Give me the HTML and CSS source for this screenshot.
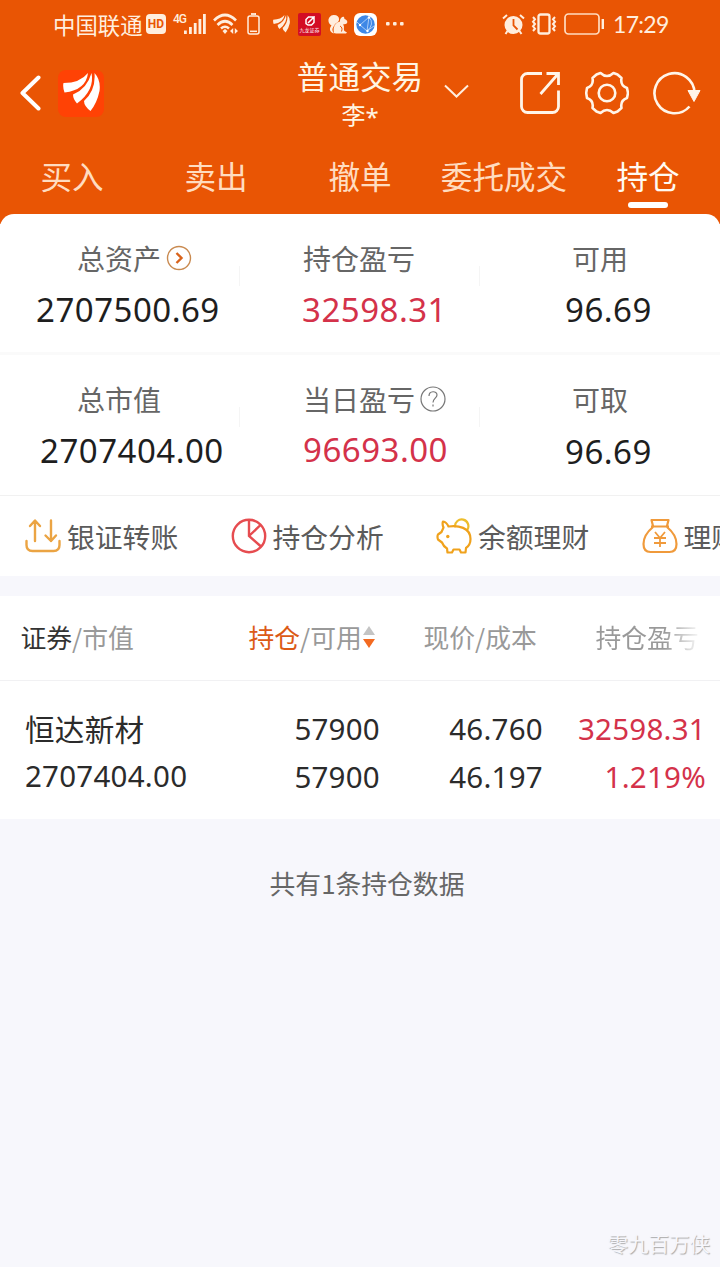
FILE: index.html
```html
<!DOCTYPE html>
<html lang="zh-CN">
<head>
<meta charset="utf-8">
<title>普通交易 - 持仓</title>
<link rel="stylesheet" href="styles.css">
</head>
<body>
<div class="app">
  <header class="header">
    <div class="status">
      <span class="carrier">中国联通</span>
      <span class="hd">HD</span>
      <span class="net">4G</span>
      <svg class="signal" width="23" height="20" viewBox="0 0 23 20"><g fill="#ffeede"><rect x="0" y="16.500" width="2.800" height="3.500"/><rect x="5" y="13" width="2.800" height="7"/><rect x="9.800" y="9" width="2.800" height="11"/><rect x="14.500" y="5" width="2.800" height="15"/><rect x="19" y="0" width="2.800" height="20"/></g></svg>
      <svg class="wifi" width="26" height="22" viewBox="0 0 26 22" fill="none" stroke="#ffeede" stroke-width="2.600"><path d="M1 7.500Q12 -3.500 23 7.500M4.500 12Q12 4.500 19.500 12M8 15.500Q12 12 16 15.500"/><path d="M9.500 18l2.500-2 2.500 2-2.500 3z" fill="#ffeede" stroke="none"/><path d="M20.200 15v6l-3.200-3zM21.800 15v6l3.200-3z" fill="#ffeede" stroke="none"/></svg>
      <svg class="cell" width="13" height="22" viewBox="0 0 13 22" fill="none" stroke="#ffeede"><rect x="1" y="3" width="11" height="18" rx="2" stroke-width="1.500"/><path d="M4 1h5" stroke-width="1.800"/><path d="M3 18.300h7" stroke-width="1.500"/></svg>
      <svg class="mini-logo" width="17" height="20" viewBox="0 0 37 41" fill="#ffeede"><path d="M.5 11Q17 11 25 1Q23 18 1.500 20.500Q-.5 15 .5 11Z"/><path d="M10 22.500Q24 17 28.500 1Q32 18 14 31.500Q10 27 10 22.500Z"/><path d="M21 29Q33 18 31.500 1Q38 8 36.500 19Q34 31 27.500 39Q21 34 21 29Z"/></svg>
      <span class="broker"><svg width="12" height="10" viewBox="0 0 12 10" fill="none" stroke="#fff" stroke-width="1.500"><path d="M9.500 1H4.500L2 3.500V7.500L4 9H7.500L10 6.500V1L4 7"/></svg><span>九龙证券</span></span>
      <svg class="squirrel" width="20" height="20" viewBox="0 0 20 20"><path d="M3.500 11.500C-1.500 9 0 1.500 5.500 1c5-.3 7 4 4.500 7-1.500 1.500-3 1-3.500 3.500-3 3-2.500 6 0 8C2 19 .5 15 3.500 11.500Z" fill="#ffeede"/><path d="M6 19C4.500 13 7.500 8.500 12 7.500c-.5-3 2.500-5.500 4-4.500l.5 2c3 1 4 4 1 5l-2.500.5c2 2 0 5 1.500 6.500l2.500 1.500-1 1H8Z" fill="#ffeede"/><path d="M12 12q3 1.500 1.500 5.500" stroke="#e95504" fill="none"/></svg>
      <svg class="globe" width="23" height="23" viewBox="0 0 23 23"><rect width="23" height="23" rx="6" fill="#fff"/><circle cx="11.500" cy="11.500" r="9.200" fill="#3e87e6"/><path d="M15 4 6 12 13 18zM15 4q6 7-2 14M3 9l3 3M13 18l7-5" fill="none" stroke="#d8eaff" stroke-width=".7"/><circle cx="15" cy="4.500" r="1.200" fill="#fff"/><circle cx="6" cy="12" r="1.200" fill="#fff"/><circle cx="13.500" cy="18" r="1.200" fill="#fff"/></svg>
      <svg class="dots" width="18" height="4" viewBox="0 0 18 4" fill="#ffeede"><rect width="3.600" height="3.600" rx="1"/><rect x="7" width="3.600" height="3.600" rx="1"/><rect x="14" width="3.600" height="3.600" rx="1"/></svg>
      <svg class="alarm" width="23" height="21" viewBox="0 0 23 21"><circle cx="11.500" cy="11" r="9" fill="#ffeede"/><path d="M1 4.500 5 1M22 4.500 18 1M5.500 17 3.500 20M17.500 17l2 3" stroke="#ffeede" stroke-width="2"/><path d="M11.500 5v6.500l4 4" fill="none" stroke="#e95504" stroke-width="1.800"/></svg>
      <svg class="vibrate" width="26" height="22" viewBox="0 0 26 22" fill="none" stroke="#ffeede" stroke-width="2.300"><rect x="7.500" y="1.500" width="11" height="19" rx="2"/><path d="M2 4l2 2.300L2 8.700 4 11l-2 2.300 2 2.400L2 18M24 4l-2 2.300 2 2.400L22 11l2 2.300-2 2.400 2 2.300" stroke-width="2"/></svg>
      <svg class="battery" width="41" height="22" viewBox="0 0 41 22" fill="none" stroke="#ffdcc0"><rect x="1" y="1" width="34" height="20" rx="3.500" stroke-width="1.700"/><path d="M38.800 6v10" stroke-width="2.400" stroke="#ffeede"/></svg>
      <span class="clock">17:29</span>
    </div>

    <div class="navbar">
      <svg class="back" width="22" height="36" viewBox="0 0 22 36" fill="none" stroke="#fff" stroke-width="4" stroke-linecap="round" stroke-linejoin="round"><path d="M18.500 2.500 2.500 18l16 15.500"/></svg>
      <span class="logo"><svg width="37" height="41" viewBox="0 0 37 41" fill="#fff"><path d="M.5 11Q17 11 25 1Q23 18 1.500 20.500Q-.5 15 .5 11Z"/><path d="M10 22.500Q24 17 28.500 1Q32 18 14 31.500Q10 27 10 22.500Z"/><path d="M21 29Q33 18 31.500 1Q38 8 36.500 19Q34 31 27.500 39Q21 34 21 29Z"/></svg></span>
      <div class="title"><div class="title-main">普通交易</div><div class="title-sub">李<span class="star">*</span></div></div>
      <svg class="caret" width="25" height="14" viewBox="0 0 25 14" fill="none" stroke="#ffeede" stroke-width="2"><path d="M1 1.500 12.500 12.500 24 1.500"/></svg>
      <svg class="share" width="40" height="44" viewBox="0 0 40 44" fill="none" stroke="#fff5e9" stroke-width="2.800"><path d="M22 2.500H7.500a6 6 0 0 0-6 6V35.500a6 6 0 0 0 6 6h25a6 6 0 0 0 6-6V19.500M26.500 2.500H38.500V14M38 3 20.500 23"/></svg>
      <svg class="gear" width="44" height="44" viewBox="0 0 44 44" fill="none" stroke="#fff5e9" stroke-width="2.600" stroke-linejoin="round"><path d="M11.500 3.500 15.500 2Q22 8 28.500 2L32.500 3.500 36.500 7Q35 14.500 42 17L43 22 42 27Q35 29.500 36.500 37L32.500 40.500 28.500 42Q22 36 15.500 42L11.500 40.500 7.500 37Q9 29.500 2 27L1.200 22 2 17Q9 14.500 7.500 7Z"/><circle cx="22" cy="22" r="8.300"/></svg>
      <svg class="refresh" width="48" height="44" viewBox="0 0 48 44" fill="none" stroke="#fff5e9" stroke-width="2.600"><path d="M36.500 35.500A20 20 0 1 1 41.500 22"/><path d="M35 19.500h12l-6 11z" fill="#fff5e9" stroke-width="1"/></svg>
    </div>

    <nav class="tabs"><span>买入</span><span>卖出</span><span>撤单</span><span>委托成交</span><span class="active">持仓</span></nav>
  </header>

  <section class="assets">
    <div class="asset-row">
      <div class="cell-a"><div class="label">总资产<svg class="more" width="26" height="26" viewBox="0 0 26 26" fill="none"><circle cx="13" cy="13" r="11.500" stroke="#c98a50" stroke-width="1.400"/><path d="m10.500 8 5 5-5 5" stroke="#d9631b" stroke-width="2.400"/></svg></div><div class="value">2707500.69</div></div>
      <div class="cell-b"><div class="label">持仓盈亏</div><div class="value up">32598.31</div></div>
      <div class="cell-c"><div class="label">可用</div><div class="value">96.69</div></div>
    </div>
    <div class="asset-row second">
      <div class="cell-a"><div class="label">总市值</div><div class="value">2707404.00</div></div>
      <div class="cell-b"><div class="label">当日盈亏<svg class="help" width="26" height="26" viewBox="0 0 26 26" fill="none" stroke="#777" stroke-width="1.200"><circle cx="13" cy="13" r="12"/><path d="M9 10c0-5.500 8-5.500 8-1 0 3-4 3.500-4 7.500M13 18.500v2"/></svg></div><div class="value up daily">96693.00</div></div>
      <div class="cell-c"><div class="label">可取</div><div class="value cash">96.69</div></div>
    </div>
  </section>

  <section class="tools">
    <div class="tool"><svg width="36" height="36" viewBox="0 0 36 36" fill="none" stroke="#eba443" stroke-width="2.400" stroke-linecap="round" stroke-linejoin="round"><path d="M10 23V3M5 8l5-5.500L15 8M26 2.500V23M20.500 17.500l5.500 5.500 5-5.500M1.500 23v4q0 6 6 6h21q6 0 6-6v-4"/></svg><span>银证转账</span></div>
    <div class="tool"><svg width="36" height="36" viewBox="0 0 36 36" fill="none" stroke="#e64c50" stroke-width="2.400"><circle cx="18" cy="18" r="16.200"/><path d="M18 2v16l12 10.500M18 18 29.500 7"/></svg><span>持仓分析</span></div>
    <div class="tool"><svg width="36" height="36" viewBox="0 0 36 36" fill="none" stroke="#f0a21c" stroke-width="2.200" stroke-linejoin="round" stroke-linecap="round"><path d="M19 8.500A6.700 6.700 0 1 1 31.500 11.500" stroke="#edbd2c"/><path d="M7 3.500Q10.500 4 12.500 8.500C22 7 34.500 9.500 34.500 21q0 6-4.500 9l-.5 4.500h-4.500l-1.500-3h-6l-1.500 3H11.500L11 30.500q-3.500-2-5-6L2 21.500Q1 18.500 2 16.500L5.500 14 7.500 9.500Q6 6 7 3.500z"/><circle cx="11.800" cy="18.500" r="1.700" fill="#f0a21c" stroke="none"/></svg><span>余额理财</span></div>
    <div class="tool"><svg width="36" height="36" viewBox="0 0 36 36" fill="none" stroke="#f09a3b" stroke-width="2.200" stroke-linejoin="round"><path d="M11 8 9.500 2h17L25 8M9 8.500h18M11 9C5 14 1.500 20 1.500 26q0 8 7 8h19q7 0 7-8c0-6-3.500-12-9.500-17"/><path d="m13 14 5 6 5-6M12 20h12M12 25h12M18 20v9" stroke-width="1.800"/></svg><span>理财</span></div>
  </section>

  <section class="table">
    <div class="thead">
      <div><b>证券</b>/市值</div>
      <div><b class="sorted">持仓</b>/可用<svg class="sort" width="12" height="24" viewBox="0 0 12 24"><path d="M0 10 6 1l6 9z" fill="#c4c4c4"/><path d="M0 14h12l-6 9z" fill="#f36a20"/></svg></div>
      <div>现价/成本</div>
      <div class="fade">持仓盈亏</div>
    </div>
    <div class="trow">
      <div><p class="name">恒达新材</p><p>2707404.00</p></div>
      <div><p>57900</p><p>57900</p></div>
      <div><p>46.760</p><p>46.197</p></div>
      <div class="up"><p>32598.31</p><p>1.219%</p></div>
    </div>
  </section>

  <p class="summary">共有1条持仓数据</p>
  <footer class="watermark">零九百万侠</footer>
</div>
</body>
</html>
```
FILE: styles.css
```css
* { box-sizing: border-box; }
body { margin: 0; font-family: "Noto Sans CJK SC", sans-serif; }
p { margin: 0; }
svg { display: block; flex: none; }
.app { width: 720px; height: 1267px; overflow: hidden; background: #f7f7fc; display: flex; flex-direction: column; }

.header { flex: none; height: 224px; background: #e95504; color: #ffeede; }
.status { height: 48px; display: flex; align-items: center; padding-left: 53px; white-space: nowrap; }
.carrier { width: 93px; font-size: 22.4px; line-height: 46px; }
.hd { width: 20px; height: 20px; border-radius: 4px; background: #ffeede; color: #e95504; font: bold 12px/20px Roboto, sans-serif; text-align: center; }
.net { width: 18px; margin-left: 7px; align-self: flex-start; font: 500 12px/12px Roboto, sans-serif; padding-top: 13px; letter-spacing: -1px; }
.signal { margin-left: -7px; }
.wifi { margin-left: 6px; }
.cell { margin-left: 8px; }
.mini-logo { margin-left: 13px; }
.broker { width: 23px; height: 23px; margin-left: 8px; background: #d30d24; color: #fff; border-radius: 2px; display: flex; flex-direction: column; align-items: center; padding-top: 3px; }
.broker span { font-size: 5px; line-height: 8px; }
.squirrel { margin-left: 7px; }
.globe { margin-left: 6px; }
.dots { margin-left: 9px; }
.alarm { margin-left: 98px; }
.vibrate { margin-left: 6px; }
.battery { margin-left: 7px; }
.clock { margin-left: 8px; font: 23px/52px Lato, sans-serif; letter-spacing: -0.700px; }

.navbar { height: 96px; display: flex; align-items: flex-start; padding-left: 20px; }
.back { margin-top: 27px; }
.logo { width: 46px; height: 47px; margin: 22px 0 0 16px; border-radius: 8px; background: #ff4205; display: flex; justify-content: center; padding-top: 2px; }
.title { width: 132px; margin-left: 190px; text-align: center; color: #fff5e3; }
.title-main { font-size: 31.6px; line-height: 40px; margin-top: 7px; }
.title-sub { display: flex; justify-content: center; height: 32px; margin-top: 3px; font-size: 24px; line-height: 32px; }
.star { font: 24px/38px "Noto Sans", sans-serif; }
.caret { margin: 36px 0 0 18px; }
.share { margin: 23px 0 0 51px; }
.gear { margin: 23px 0 0 25px; }
.refresh { margin: 23px 0 0 24px; }

.tabs { display: grid; grid-template-columns: repeat(5, 144px); text-align: center; font-size: 31.6px; line-height: 62px; color: #ffdcc0; }
.tabs .active { color: #fffaf2; display: flex; flex-direction: column; align-items: center; }
.tabs .active::after { content: ""; width: 40px; height: 6px; margin-top: -4px; border-radius: 3px; background: #fff; }

.assets { flex: none; height: 282px; margin-top: -10px; background: #fff; border-radius: 14px 14px 0 0; border-bottom: 1px solid #f1f1f1; }
.asset-row { height: 141px; display: grid; grid-template-columns: 240px 240px 240px; padding-top: 24px; border-bottom: 3px solid #fafafa; }
.asset-row.second { height: 140px; border-bottom: 0; }
.asset-row > div { background: linear-gradient(#f5f5f5, #f5f5f5) right 28px / 1px 20px no-repeat; }
.asset-row > div:last-child { background: none; }
.label { display: flex; align-items: center; height: 40px; font-size: 28px; line-height: 38px; color: #666; }
.value { font: 33px/48px "Noto Sans", sans-serif; letter-spacing: 0.500px; margin-top: 8px; color: #1e1e1e; }
.up, .value.up { color: #d4324a; }
.cell-a .label { padding-left: 77px; }
.cell-a .value { padding-left: 36px; }
.second .cell-a .value { padding-left: 40px; }
.cell-b { padding-left: 63px; }
.cell-b .value { margin-left: -1px; }
.cell-b .daily { margin-top: 7px; margin-left: 0; }
.cell-c { padding-left: 85px; }
.cell-c .label { padding-left: 7px; }
.cell-c .cash { margin-top: 9px; }
.more, .help { margin: -1px 0 0 5px; }

.tools { flex: none; height: 80px; display: flex; overflow: hidden; background: #fff; padding-left: 25px; }
.tool { flex: none; width: 205.500px; display: flex; align-items: center; gap: 6px; font-size: 27.800px; line-height: 40px; color: #5b5b5b; white-space: nowrap; }
.tool span { margin-top: -1px; }

.table { flex: none; margin-top: 20px; background: #fff; }
.thead { height: 85px; border-bottom: 1px solid #f1f1f3; display: grid; grid-template-columns: 228px 175px 172px 125px; padding-left: 20.500px; font-size: 25.800px; line-height: 80px; color: #999; white-space: nowrap; }
.thead b { font-weight: 400; color: #333; }
.thead .sorted { color: #dc5a16; }
.thead > div { display: flex; align-items: center; height: 82px; }
.thead .fade { background: linear-gradient(90deg, #999 68px, #fff 106px); background-clip: text; color: transparent; }
.sort { margin-left: 1px; }
.trow { height: 138px; display: grid; grid-template-columns: 180px 175px 163px 163px; padding: 24px 0 0 25px; font: 29.500px/48px "Noto Sans", sans-serif; letter-spacing: 0.250px; color: #2b2b2b; }
.trow > div + div { text-align: right; }
.trow .up { color: #d4324a; }
.trow .name { font: 29.600px/47px "Noto Sans CJK SC", sans-serif; }

.summary { margin-top: 44px; padding-left: 14px; text-align: center; font-size: 25.800px; line-height: 40px; color: #666; }
.watermark { margin-top: auto; padding: 0 10px 8px 0; text-align: right; font-size: 20.500px; line-height: 32px; color: #f7f7fc; text-shadow: 1px 1px 1px #aaa; }
```
